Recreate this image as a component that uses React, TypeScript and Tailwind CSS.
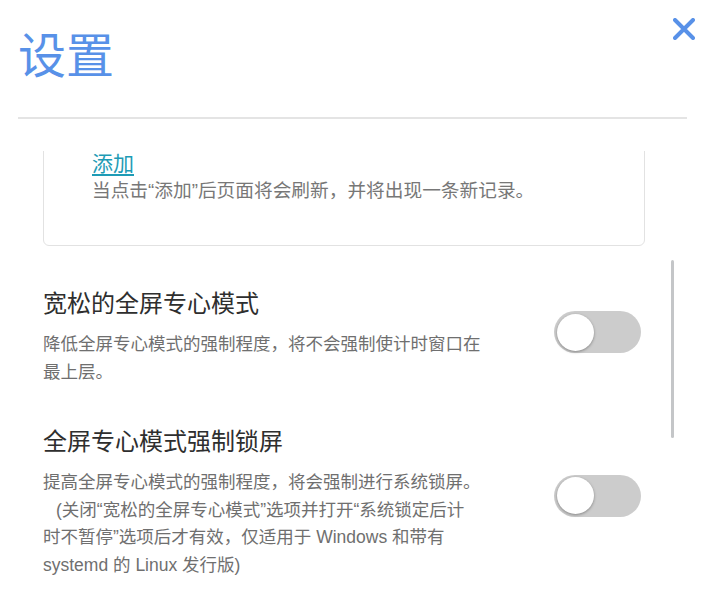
import React from "react";

const FONT = "font-['Liberation_Sans','Noto_Sans_CJK_SC',sans-serif]";

interface ToggleRowProps {
  title: string;
  desc: React.ReactNode;
  toggleOffset?: string;
}

const Toggle = ({ className }: { className: string }) => (
  <div className={`w-[87px] h-[42px] shrink-0 rounded-full bg-[#cccccc] flex items-center pl-[3px] ${className}`}>
    <div className="w-[37px] h-[37px] rounded-full bg-white shadow-[0_1px_3px_rgba(0,0,0,0.35)]" />
  </div>
);

const ToggleRow: React.FC<ToggleRowProps> = ({ title, desc, toggleOffset = "mb-[10px]" }) => (
  <div className="flex items-center justify-between">
    <div className="w-[438px]">
      <h3 className="text-[24px] leading-[32px] text-[#2e2e2e]">{title}</h3>
      <p className="mt-[11px] text-[17.5px] leading-[27.5px] text-[#6f6f6f]">
        {desc}
      </p>
    </div>
    <Toggle className={toggleOffset} />
  </div>
);

export default function App() {
  return (
    <div className={`relative w-[716px] h-[589px] bg-white overflow-hidden ${FONT}`}>
      <header className="px-[18px] pt-[33px]">
        <h1 className="text-[48px] leading-[48px] text-[#5891e8]">设置</h1>
        <div className="mt-[36px] h-[2px] w-[669px] bg-[#e4e4e4]" />
      </header>

      <button className="absolute left-[673px] top-[18px] w-[22px] h-[22px]">
        <svg viewBox="0 0 22 22" width="22" height="22">
          <path
            d="M2 2 L20 20 M20 2 L2 20"
            stroke="#5891e8"
            strokeWidth="4"
            strokeLinecap="round"
            fill="none"
          />
        </svg>
      </button>

      {/* scroll viewport */}
      <div className="mt-[32px] h-[437px] overflow-hidden">
        <div className="-mt-[20px] pl-[43px] pr-[75px]">
          <div className="mr-[-4px] border border-[#e2e2e2] rounded-[6px] pt-[19px] pb-[40px] pl-[48px]">
            <a className="block text-[21px] leading-[26px] text-[#1e9bb5] underline underline-offset-[3px]">
              添加
            </a>
            <p className="text-[18.7px] leading-[28px] text-[#777777]">
              当点击“添加”后页面将会刷新，并将出现一条新记录。
            </p>
          </div>

          <div className="mt-[42px]">
            <ToggleRow
              title="宽松的全屏专心模式"
              desc="降低全屏专心模式的强制程度，将不会强制使计时窗口在最上层。"
            />
          </div>
          <div className="mt-[40px]">
            <ToggleRow
              title="全屏专心模式强制锁屏"
              toggleOffset="mb-[14px]"
              desc={
                <>
                  提高全屏专心模式的强制程度，将会强制进行系统锁屏。<span className="pl-[13px]">(关闭“宽松的全屏专心模式”选项并打开“系统锁定后计时不暂停”选项后才有效，仅适用于 Windows 和带有 systemd 的 Linux 发行版)</span>
                </>
              }
            />
          </div>
        </div>
      </div>

      {/* scrollbar thumb */}
      <div className="absolute left-[671px] top-[260px] w-[3px] h-[178px] rounded-full bg-[#c4c6c8]" />
    </div>
  );
}
